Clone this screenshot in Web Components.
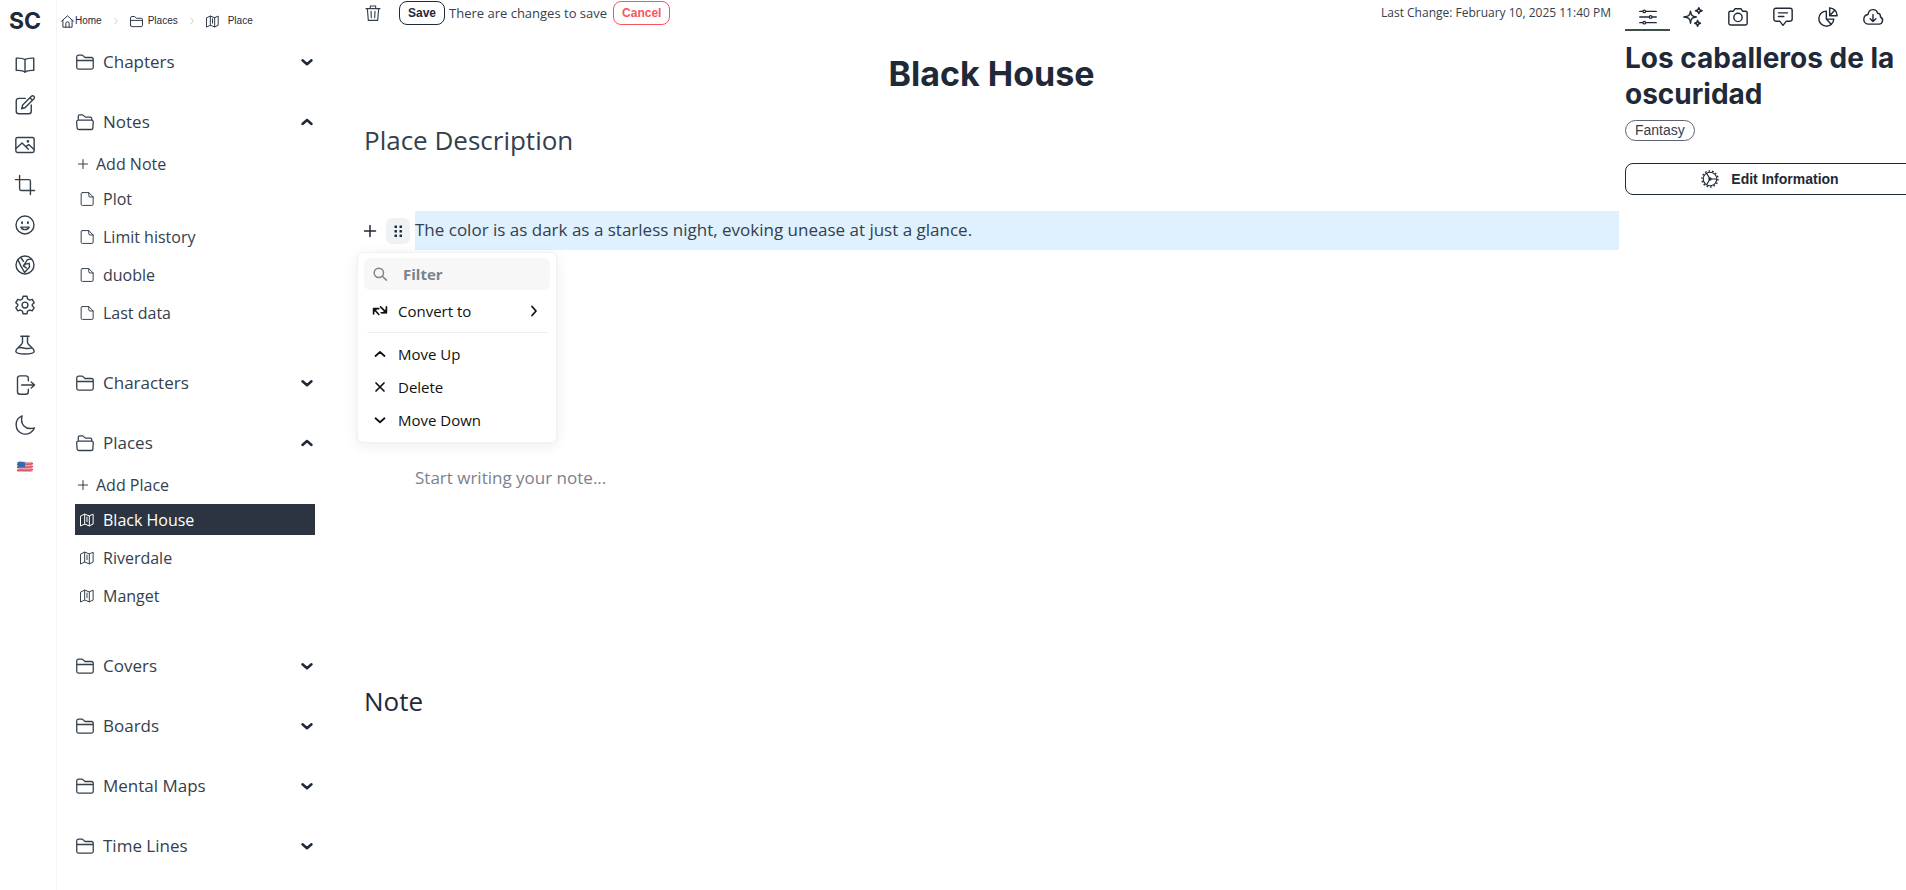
<!DOCTYPE html>
<html lang="en">
<head>
<meta charset="utf-8">
<title>Black House - Places</title>
<style>
  html, body { margin: 0; min-height: 100%; background: #fff; }
  body {
    --ink: #1f2937;
    --text: #35404d;
    --display: Inter, "Liberation Sans", sans-serif;
    --label: "Liberation Sans", Arial, sans-serif;
    font-family: "Open Sans", "Noto Sans", sans-serif;
    color: var(--text);
    overflow-x: hidden;
  }
</style>
</head>
<body>
<app-shell>
  <side-rail slot="rail"></side-rail>
  <side-nav slot="nav">
    <nav-section label="Chapters"></nav-section>
    <nav-section label="Notes" open add="Add Note">
      <nav-item icon="file">Plot</nav-item>
      <nav-item icon="file">Limit history</nav-item>
      <nav-item icon="file">duoble</nav-item>
      <nav-item icon="file">Last data</nav-item>
    </nav-section>
    <nav-section label="Characters"></nav-section>
    <nav-section label="Places" open add="Add Place">
      <nav-item icon="map" selected>Black House</nav-item>
      <nav-item icon="map">Riverdale</nav-item>
      <nav-item icon="map">Manget</nav-item>
    </nav-section>
    <nav-section label="Covers"></nav-section>
    <nav-section label="Boards"></nav-section>
    <nav-section label="Mental Maps"></nav-section>
    <nav-section label="Time Lines"></nav-section>
  </side-nav>
  <place-editor slot="main">
    <span slot="title">Black House</span>
    <span slot="description">The color is as dark as a starless night, evoking unease at just a glance.</span>
    <block-menu slot="menu"></block-menu>
  </place-editor>
  <project-panel slot="panel">
    <span slot="title">Los caballeros de la oscuridad</span>
    <span slot="genre">Fantasy</span>
  </project-panel>
</app-shell>

<script>
const ICONS = {
  book: '<path d="M12 5.5C10 4 7 3.500 1.500 3.800V18.500C6 18.200 10 18.500 12 20.800C14 18.500 18 18.200 22.500 18.500V3.800C17 3.500 14 4 12 5.500ZM12 5.500V20.500"/>',
  edit: '<path d="M12.500 4H4.500A3 3 0 0 0 1.500 7V19.500A3 3 0 0 0 4.500 22.500H16.500A3 3 0 0 0 19.500 19.500V12M8 16.500L9.200 12L19.700 1.600A1.900 1.900 0 0 1 22.700 4.400L12.300 15ZM18 3.300L21 6.200"/>',
  image: '<rect x="1" y="3" width="22" height="18" rx="2"/><path d="M1.500 16L8.500 9.500L16 17M13 14L16.500 11.500L22.500 17"/><circle cx="15.500" cy="7.500" r=".8"/>',
  crop: '<path d="M5.500 .5V16.500A2 2 0 0 0 7.500 18.500H23.500M.5 5.500H16.500A2 2 0 0 1 18.500 7.500V23.500"/>',
  smile: '<circle cx="12" cy="12" r="10.800"/><path d="M7 14.500C9 18.500 15 18.500 17 14.500Z"/><path d="M8.500 8.500V10M15.500 8.500V10" stroke-width="2.200"/>',
  globe: '<circle cx="12" cy="12" r="10.800"/><path d="M3.500 5.500L7 13L11.500 21L17.500 14.500L17 10L12.500 11L10 13L15 5.500L20 5M7 3L10 7.500M10 13L13.500 15.500"/>',
  gear: '<path d="M9.700 1.500H14.300L15.100 4.700L17.600 6.100L20.700 5.200L23 9.200L20.700 11.500V13L23 15.200L20.700 19L17.600 18L15.100 19.400L14.300 22.500H9.700L8.900 19.400L6.400 18L3.300 19L1 15.200L3.300 13V11.500L1 9.200L3.300 5.200L6.400 6.100L8.900 4.700Z"/><circle cx="12" cy="12" r="3.500"/>',
  flask: '<path d="M7 1.500H17M9 1.500V9C9 12 1 15.500 1 19.500C1 21.500 4 22.800 12 22.800S23 21.500 23 19.500C23 15.500 15 12 15 9V1.500M4 15.500C8 13.500 13 18 20 15.500"/>',
  exit: '<path d="M16 7V4A3 3 0 0 0 13 1H6A3 3 0 0 0 3 4V20A3 3 0 0 0 6 23H13A3 3 0 0 0 16 20V17M8 12H23.500M19.500 8.500L23.500 12L19.500 15.500"/>',
  moon: '<path d="M8.500 1C-1.500 5 -1 20 10 22.700C16 23.800 21.500 20.500 23.200 15.500C12 18.500 6 11 8.500 1Z"/>',
  flag: '<g stroke="none"><path fill="#e9a5aa" d="M2 5.500C8 3.500 14 6.500 22 4.500V18C15 20 9 17 2 19Z"/><path d="M2 8.500C9 7 14 9.500 22 7.500M2 12.500C9 11 14 13.500 22 11.500M2 16.500C9 15 14 17.500 22 15.500" stroke="#d9485a" stroke-width="1.800" fill="none"/><path fill="#3a66ad" d="M2 5.500C6 4.300 8.500 5 12 5.600V12.800C8.500 12 6 12 2 12.800Z"/></g>',
  home: '<path d="M1 11.500L12 1.500L23 11.500M3.500 9.500V22.500H20.500V9.500M9 22.500V15.500A3 3 0 0 1 15 15.500V22.500"/>',
  folder: '<path d="M1 19V5A2.500 2.500 0 0 1 3.500 2.800H8.500L12 6H20.500A2.500 2.500 0 0 1 23 8.500V19A2.500 2.500 0 0 1 20.500 21.500H3.500A2.500 2.500 0 0 1 1 19ZM1 10H23"/>',
  folderOpen: '<path d="M3 9.500V4.500A2 2 0 0 1 5 2.500H9L12.500 5.500H19A2 2 0 0 1 21 7.500V9.500M3 9.500H20.500A2.500 2.500 0 0 1 23 12L22.500 19.500A2.500 2.500 0 0 1 20 22H4A2.500 2.500 0 0 1 1.500 19.500L.8 12A2.500 2.500 0 0 1 3 9.500Z"/>',
  file: '<path d="M4 1H15L22.500 8.500V21A2 2 0 0 1 20.500 23H4A2 2 0 0 1 2 21V3A2 2 0 0 1 4 1ZM15 1V6.500A2 2 0 0 0 17 8.500H22.500"/>',
  map: '<path d="M1.500 5L8 2L16 5L22.500 2V19L16 22L8 19L1.500 22ZM8 2V19M16 5V22M12 7V15"/>',
  down: '<path d="M3 8.500L12 16.500L21 8.500"/>',
  up: '<path d="M3 16L12 8L21 16"/>',
  right: '<path d="M8 3L16 12L8 21"/>',
  plus: '<path d="M12 1V23M1 12H23"/>',
  cross: '<path d="M4 4L20 20M20 4L4 20"/>',
  drag: '<g fill="currentColor" stroke="none"><rect x="5" y="1" width="5" height="5" rx="1"/><rect x="15" y="1" width="5" height="5" rx="1"/><rect x="5" y="10" width="5" height="5" rx="1"/><rect x="15" y="10" width="5" height="5" rx="1"/><rect x="5" y="19" width="5" height="5" rx="1"/><rect x="15" y="19" width="5" height="5" rx="1"/></g>',
  search: '<circle cx="10" cy="10" r="8"/><path d="M16 16L23 22.500"/>',
  convert: '<g stroke-width="2.800"><path d="M1 17V8H10M2 9L10 18M13 5L22 14"/><path d="M23 5V15H14"/></g><path fill="currentColor" stroke="none" d="M0 7H9L0 16ZM24 7V16H15Z"/>',
  trash: '<path d="M1.500 5.500H22.500M8 5V1.500H16V5M3.500 5.500L5 23H19L20.500 5.500M9 9.500L9.500 19M15 9.500L14.500 19"/>',
  sliders: '<path d="M1 4.500H5M9 4.500H23M1 12H13M18 12H23M1 19.500H5M9 19.500H23"/><circle cx="7" cy="4.500" r="1.800"/><circle cx="15.500" cy="12" r="1.800"/><circle cx="7" cy="19.500" r="1.800"/>',
  sparkles: '<path d="M9 5C9.500 10 11 11.500 16 12C11 12.500 9.500 14 9 19.500C8.500 14 7 12.500 1 12C7 11.500 8.500 10 9 5ZM19 .8C19.300 3.500 20.300 4.200 23 4.500C20.300 4.800 19.300 5.500 19 8C18.700 5.500 17.700 4.800 15 4.500C17.700 4.200 18.700 3.500 19 .8ZM17.500 16C17.800 18.500 18.500 19.200 21 19.500C18.500 19.800 17.800 20.500 17.500 23.200C17.200 20.500 16.500 19.800 14 19.500C16.500 19.200 17.200 18.500 17.500 16Z"/>',
  camera: '<path d="M3 5H6.500L8.500 2H15.500L17.500 5H21A2 2 0 0 1 23 7V19.500A2 2 0 0 1 21 21.500H3A2 2 0 0 1 1 19.500V7A2 2 0 0 1 3 5Z"/><circle cx="12" cy="12.500" r="5"/>',
  chat: '<path d="M3.500 1.500H20.500A2.500 2.500 0 0 1 23 4V14.500A2.500 2.500 0 0 1 20.500 17H16L12 22L8 17H3.500A2.500 2.500 0 0 1 1 14.500V4A2.500 2.500 0 0 1 3.500 1.500ZM6.500 7H17.500M6.500 11.500H13"/>',
  pie: '<path d="M10 5A9 9 0 1 0 19 14.500H10ZM10 14.500L16 21M14 1V10.500H23A9.500 9.500 0 0 0 14 1ZM14 10.500L20 4"/>',
  cloud: '<path d="M6 20.500H18.500A4.500 4.500 0 0 0 21 12C21 9 19.500 7.500 17.500 7.500C16 1.500 7 1.500 6 9C2.500 9.500 1 12 1 15A5.300 5.300 0 0 0 6 20.500ZM12 9V17.500M8.500 14L12 17.500L15.500 14"/>',
  cog: '<circle cx="12" cy="12" r="9"/><circle cx="12" cy="12" r="10.700" stroke-width="1.800" stroke-linecap="butt" stroke-dasharray="2.200 2.602"/><path d="M12 12H21M12 12L7.500 4.500M12 12L7.500 19.500"/><circle cx="12" cy="12" r="1.500"/>'
};

function define(name, render) {
  customElements.define(name, class extends HTMLElement {
    connectedCallback() {
      if (this.shadowRoot) return;
      this.attachShadow({ mode: 'open' }).innerHTML = render(this);
    }
  });
}

const RESET = `
  :host, *, *::before, *::after { box-sizing: border-box; }
  button { font: inherit; color: inherit; background: none; border: 0; padding: 0; margin: 0; cursor: pointer; }
  a { color: inherit; text-decoration: none; }
`;

define('ui-icon', el => `
  <style>
    :host { display: inline-flex; flex: none; width: var(--size, 20px); height: var(--size, 20px); }
    svg { width: 100%; height: 100%; overflow: visible; }
  </style>
  <svg viewBox="0 0 24 24" fill="none" stroke="currentColor" stroke-width="${el.getAttribute('weight') || 1.7}"
    stroke-linecap="round" stroke-linejoin="round" aria-hidden="true">${ICONS[el.getAttribute('name')]}</svg>`);

define('app-shell', () => `
  <style>
    :host { display: grid; grid-template-columns: 57px 300px minmax(0, 1fr) 281px; min-height: 100vh; }
    ::slotted([slot=panel]) { overflow: hidden; }
  </style>
  <slot name="rail"></slot><slot name="nav"></slot><slot name="main"></slot><slot name="panel"></slot>`);

const RAIL = [['book', 'Chapters'], ['edit', 'Notes'], ['image', 'Covers'], ['crop', 'Boards'], ['smile', 'Characters'],
  ['globe', 'Places'], ['gear', 'Settings'], ['flask', 'Lab'], ['exit', 'Sign out'], ['moon', 'Dark mode'], ['flag', 'Language']];

define('side-rail', () => `
  <style>${RESET}
    :host { display: block; border-right: 1px solid #f3f4f6; }
    nav { display: flex; flex-direction: column; width: 50px; }
    .logo { height: 45px; padding-top: 6px; line-height: 30px; text-align: center; font-family: var(--display); font-weight: 700; font-size: 23px; color: var(--ink); }
    button { display: grid; place-items: center; height: 40px; }
    button:last-child { --size: 18px; height: 44px; }
  </style>
  <nav aria-label="Tools"><a class="logo" href="#">SC</a>
    ${RAIL.map(([i, l]) => `<button aria-label="${l}"><ui-icon name="${i}"></ui-icon></button>`).join('')}
  </nav>`);

define('bread-crumbs', () => `
  <style>${RESET}
    :host { display: block; --size: 13px; font: 10px/14px var(--label); color: var(--ink); }
    nav { display: flex; align-items: center; height: 42px; }
    a { display: flex; align-items: center; gap: 1px; }
    a.wide { gap: 5px; }
    a.wider { gap: 9px; }
    .sep { --size: 8px; margin: 0 10px; color: #9ca3af; }
  </style>
  <nav aria-label="Breadcrumb">
    <a href="#"><ui-icon name="home"></ui-icon>Home</a><ui-icon class="sep" name="right"></ui-icon>
    <a class="wide" href="#"><ui-icon name="folder"></ui-icon>Places</a><ui-icon class="sep" name="right"></ui-icon>
    <a class="wider" href="#"><ui-icon name="map"></ui-icon>Place</a>
  </nav>`);

define('side-nav', () => `
  <style>${RESET}
    :host { display: block; padding: 0 42px 28px 4px; }
    .sections { display: flex; flex-direction: column; gap: 28px; padding: 4px 0 0 14px; }
  </style>
  <bread-crumbs></bread-crumbs>
  <div class="sections"><slot></slot></div>`);

define('nav-section', el => {
  const open = el.hasAttribute('open');
  return `
  <style>${RESET}
    :host { display: block; }
    .head { display: flex; align-items: center; width: 100%; height: 32px; font-size: 17px; line-height: 24px; text-align: left; }
    .head span { flex: 1; margin-left: 9px; }
    ui-icon { --size: 18px; }
    .head .mark { --size: 12px; margin-right: 2px; color: var(--ink); }
    .head > ui-icon:first-child { margin-left: 1px; }
    .body { padding: 10px 0 11px; }
    .add { display: flex; align-items: center; gap: 8px; height: 31px; padding-left: 3px; font-size: 16px; line-height: 24px; }
    .add ui-icon { --size: 10px; }
    .items { display: flex; flex-direction: column; gap: 7px; padding-top: 4px; }
  </style>
  <button class="head" aria-expanded="${open}"><ui-icon name="${open ? 'folderOpen' : 'folder'}"></ui-icon><span>${el.getAttribute('label')}</span><ui-icon class="mark" weight="5" name="${open ? 'up' : 'down'}"></ui-icon></button>
  ${open ? `<div class="body"><button class="add"><ui-icon name="plus" weight="2.500"></ui-icon>${el.getAttribute('add')}</button><div class="items"><slot></slot></div></div>` : ''}`;
});

define('nav-item', el => `
  <style>${RESET}
    :host { display: block; }
    :host([selected]) { background: #2b3440; color: #fff; }
    a { display: flex; align-items: center; gap: 9px; height: 31px; padding-left: 5px; font-size: 16px; line-height: 24px; }
    ui-icon { --size: 14px; }
  </style>
  <a href="#"><ui-icon name="${el.getAttribute('icon')}"></ui-icon><slot></slot></a>`);

define('place-editor', () => `
  <style>${RESET}
    :host { display: block; padding: 0 6px 0 7px; }
    .bar { display: flex; align-items: center; height: 26px; font-size: 13px; line-height: 20px; }
    .trash { display: flex; --size: 16px; margin: 0 18px 0 1px; }
    .pill { height: 24px; padding: 0 8px; border: 1px solid currentColor; border-radius: 8px; font: 700 12px/22px var(--label); color: var(--ink); }
    .cancel { color: #f8535f; }
    .state { margin: 0 6px 0 4px; }
    time { margin-left: auto; padding-right: 8px; font-size: 12px; }
    h1 { margin: 26px 0 0; text-align: center; font: 700 34px/44px var(--display); color: var(--ink); }
    h2 { margin: 26px 0 0; font-weight: 400; font-size: 26px; line-height: 36px; }
    .block { position: relative; display: grid; grid-template-columns: 51px 1fr; align-items: center; margin-top: 53px; }
    .tools { display: flex; align-items: center; justify-content: space-between; height: 38px; padding-right: 5px; --size: 12px; color: var(--ink); }
    .tools button { display: grid; place-items: center; }
    .tools .drag { width: 24px; height: 26px; border-radius: 6px; background: #eff2f5; }
    p { margin: 0; padding-bottom: 1px; background: #dff1fe; font-size: 17px; line-height: 38px; }
    ::slotted([slot=menu]) { position: absolute; top: 41px; left: -7px; z-index: 1; }
    textarea { display: block; width: calc(100% - 51px); height: 204px; margin: 208px 0 0 51px; padding: 0; border: 0; outline: 0; resize: none; background: none; color: inherit; font: 17px/40px "Open Sans", sans-serif; }
    textarea::placeholder { color: #7b818d; opacity: 1; }
    .note { margin-top: 21px; color: var(--ink); }
  </style>
  <div class="bar">
    <button class="trash" aria-label="Delete place"><ui-icon name="trash"></ui-icon></button>
    <button class="pill">Save</button><span class="state">There are changes to save</span><button class="pill cancel">Cancel</button>
    <time>Last Change: February 10, 2025 11:40 PM</time>
  </div>
  <h1><slot name="title"></slot></h1>
  <h2>Place Description</h2>
  <div class="block">
    <div class="tools">
      <button aria-label="Add block"><ui-icon name="plus" weight="3"></ui-icon></button>
      <button class="drag" aria-label="Block options"><ui-icon name="drag"></ui-icon></button>
    </div>
    <p><slot name="description"></slot></p>
    <slot name="menu"></slot>
  </div>
  <textarea aria-label="Note text" placeholder="Start writing your note..."></textarea>
  <h2 class="note">Note</h2>`);

define('block-menu', () => `
  <style>${RESET}
    :host { display: block; width: 200px; padding: 5px 6px 6px; border: 1px solid #f0f1f3; border-radius: 6px; background: #fff; box-shadow: 0 3px 14px rgba(20, 30, 40, .08); font-size: 15px; line-height: 20px; color: #111; }
    label { display: flex; align-items: center; gap: 16px; height: 32px; padding-left: 9px; border-radius: 6px; background: #f7f7f7; --size: 14px; color: #7b818d; }
    input { flex: 1; min-width: 0; padding: 0; border: 0; outline: 0; background: none; font: 700 15px/20px "Open Sans", sans-serif; }
    input::placeholder { color: #7b818d; opacity: 1; }
    button { display: flex; align-items: center; width: 100%; height: 33px; padding: 0 10px; --size: 12px; }
    button span { flex: 1; margin-left: 12px; text-align: left; }
    button.convert { margin-top: 4px; padding-left: 9px; }
    .convert ui-icon:first-child { --size: 14px; }
    .convert span { margin-left: 11px; }
    hr { height: 1px; margin: 5px 3px 4px; border: 0; background: #eceeef; }
  </style>
  <label><ui-icon name="search" weight="2.500"></ui-icon><input type="text" placeholder="Filter" aria-label="Filter"></label>
  <button class="convert"><ui-icon name="convert"></ui-icon><span>Convert to</span><ui-icon name="right" weight="3.500"></ui-icon></button>
  <hr>
  <button><ui-icon name="up" weight="3.500"></ui-icon><span>Move Up</span></button>
  <button><ui-icon name="cross" weight="3.500"></ui-icon><span>Delete</span></button>
  <button><ui-icon name="down" weight="3.500"></ui-icon><span>Move Down</span></button>`);

const TABS = [['sliders', 'Details'], ['sparkles', 'Assistant'], ['camera', 'Snapshots'], ['chat', 'Comments'], ['pie', 'Statistics'], ['cloud', 'Download']];

define('project-panel', () => `
  <style>${RESET}
    :host { display: block; }
    .inner { width: 290px; }
    .tabs { display: flex; color: var(--ink); }
    .tabs button { display: grid; place-items: center; width: 45px; height: 31px; padding-top: 5px; border-bottom: 2px solid transparent; }
    .tabs button[aria-selected=true] { border-color: #3c5146; --size: 18px; }
    h1 { margin: 9px 0 8px; font: 700 28px/36px var(--display); color: var(--ink); }
    .genre { display: flex; }
    .chip { height: 21px; padding: 0 9px; border: 1px solid #5b6470; border-radius: 11px; font: 14px/19px var(--label); }
    .edit { display: flex; align-items: center; justify-content: center; gap: 12px; width: 100%; height: 32px; margin-top: 22px; border: 1px solid var(--ink); border-radius: 8px; font: 700 14px/20px var(--label); color: var(--ink); --size: 18px; }
  </style>
  <div class="inner">
    <div class="tabs" role="tablist">
      ${TABS.map(([i, l], n) => `<button role="tab" aria-selected="${n === 0}" aria-label="${l}"><ui-icon name="${i}"></ui-icon></button>`).join('')}
    </div>
    <h1><slot name="title"></slot></h1>
    <div class="genre"><span class="chip"><slot name="genre"></slot></span></div>
    <button class="edit"><ui-icon name="cog" weight="1.500"></ui-icon>Edit Information</button>
  </div>`);
</script>
</body>
</html>
